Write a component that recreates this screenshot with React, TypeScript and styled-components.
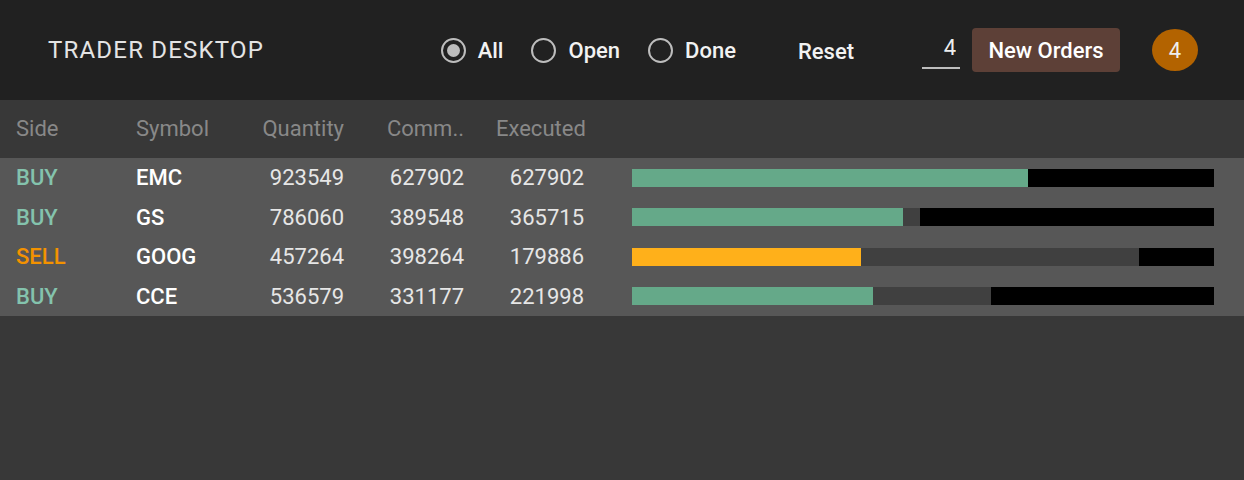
import React, { useState } from "react";
import styled, { createGlobalStyle } from "styled-components";

const GlobalStyle = createGlobalStyle`
  html, body {
    margin: 0;
    padding: 0;
    background: #383838;
    font-family: Roboto, "Noto Sans", "Liberation Sans", sans-serif;
  }
  #root {
    min-height: 100vh;
    background: #383838;
  }
  * { box-sizing: border-box; }
`;

const Page = styled.div`
  min-height: 100vh;
  display: flex;
  flex-direction: column;
  background: #383838;
`;

const TopBar = styled.header`
  height: 100px;
  background: #212121;
  display: flex;
  align-items: center;
  justify-content: space-between;
  padding: 0 46px 0 48px;
`;

const Title = styled.h1`
  margin: 0;
  font-size: 24px;
  font-weight: 400;
  letter-spacing: 1.2px;
  color: #e4e4e4;
  line-height: 1;
`;

const Controls = styled.div`
  display: flex;
  align-items: center;
`;

const RadioGroup = styled.div`
  display: flex;
  align-items: center;
  gap: 28px;
  margin-right: 62px;
`;

const RadioLabel = styled.label`
  display: flex;
  align-items: center;
  gap: 12px;
  cursor: pointer;
  font-size: 22px;
  font-weight: 500;
  color: #f2f2f2;
`;

const RadioRing = styled.span<{ $checked: boolean }>`
  width: 25px;
  height: 25px;
  border-radius: 50%;
  border: 2px solid #bdbdbd;
  display: flex;
  align-items: center;
  justify-content: center;
  &::after {
    content: "";
    width: 13px;
    height: 13px;
    border-radius: 50%;
    background: ${(p) => (p.$checked ? "#bdbdbd" : "transparent")};
  }
`;

const TextButton = styled.button`
  background: none;
  border: none;
  padding: 0;
  margin-right: 68px;
  margin-top: 2px;
  font-family: inherit;
  font-size: 22px;
  font-weight: 500;
  color: #f2f2f2;
  cursor: pointer;
`;

const CountInput = styled.input`
  width: 38px;
  height: 36px;
  margin-right: 12px;
  margin-top: 2px;
  background: transparent;
  border: none;
  border-bottom: 2px solid #bdbdbd;
  color: #eeeeee;
  font-family: inherit;
  font-size: 22px;
  text-align: right;
  padding: 0 4px 6px 0;
  outline: none;
`;

const PrimaryButton = styled.button`
  width: 148px;
  height: 44px;
  border: none;
  border-radius: 4px;
  background: #5d4037;
  color: #ffffff;
  font-family: inherit;
  font-size: 22px;
  font-weight: 500;
  margin-right: 32px;
  cursor: pointer;
`;

const Badge = styled.div`
  width: 46px;
  height: 42px;
  border-radius: 50%;
  background: #b36300;
  color: #eeeeee;
  font-size: 22px;
  display: flex;
  align-items: center;
  justify-content: center;
`;

const Table = styled.div`
  display: flex;
  flex-direction: column;
`;

const gridCols = "120px 120px 120px 120px 120px 1fr";

const HeadRow = styled.div`
  display: grid;
  grid-template-columns: ${gridCols};
  height: 58px;
  align-items: center;
  background: #383838;
`;

const HeadCell = styled.div<{ $right?: boolean }>`
  padding: 0 16px;
  font-size: 22px;
  color: #888888;
  text-align: ${(p) => (p.$right ? "right" : "left")};
  white-space: nowrap;
  margin-top: -2px;
`;

const Body = styled.div`
  background: #575757;
  display: flex;
  flex-direction: column;
`;

const Row = styled.div`
  display: grid;
  grid-template-columns: ${gridCols};
  height: 39.5px;
  align-items: center;
`;

const SideCell = styled.div<{ $sell: boolean }>`
  padding: 0 16px;
  font-size: 22px;
  font-weight: 500;
  color: ${(p) => (p.$sell ? "#f39200" : "#84c3ad")};
`;

const SymbolCell = styled.div`
  padding: 0 16px;
  font-size: 22px;
  font-weight: 500;
  color: #ffffff;
`;

const NumCell = styled.div`
  padding: 0 16px;
  font-size: 22px;
  color: #e6e6e6;
  text-align: right;
`;

const BarCell = styled.div`
  padding: 0 30px 0 32px;
`;

const Bar = styled.div`
  height: 18px;
  display: flex;
  background: #000000;
`;

const Segment = styled.div<{ $tone: "buy" | "sell" | "pending" }>`
  height: 100%;
  background: ${(p) =>
    p.$tone === "buy" ? "#65a989" : p.$tone === "sell" ? "#ffb01a" : "#404040"};
`;

type Order = {
  side: "BUY" | "SELL";
  symbol: string;
  quantity: number;
  committed: number;
  executed: number;
};

const orders: Order[] = [
  { side: "BUY", symbol: "EMC", quantity: 923549, committed: 627902, executed: 627902 },
  { side: "BUY", symbol: "GS", quantity: 786060, committed: 389548, executed: 365715 },
  { side: "SELL", symbol: "GOOG", quantity: 457264, committed: 398264, executed: 179886 },
  { side: "BUY", symbol: "CCE", quantity: 536579, committed: 331177, executed: 221998 },
];

export default function App() {
  const [filter, setFilter] = useState("All");
  const [count, setCount] = useState("4");

  return (
    <Page>
      <GlobalStyle />
      <TopBar>
        <Title>TRADER DESKTOP</Title>
        <Controls>
          <RadioGroup>
            {["All", "Open", "Done"].map((opt) => (
              <RadioLabel key={opt} onClick={() => setFilter(opt)}>
                <RadioRing $checked={filter === opt} />
                {opt}
              </RadioLabel>
            ))}
          </RadioGroup>
          <TextButton>Reset</TextButton>
          <CountInput value={count} onChange={(e) => setCount(e.target.value)} />
          <PrimaryButton>New Orders</PrimaryButton>
          <Badge>4</Badge>
        </Controls>
      </TopBar>
      <Table>
        <HeadRow>
          <HeadCell>Side</HeadCell>
          <HeadCell>Symbol</HeadCell>
          <HeadCell $right>Quantity</HeadCell>
          <HeadCell $right>Comm..</HeadCell>
          <HeadCell $right>Executed</HeadCell>
          <div />
        </HeadRow>
        <Body>
          {orders.map((o) => {
            const execPct = (o.executed / o.quantity) * 100;
            const pendPct = ((o.committed - o.executed) / o.quantity) * 100;
            return (
              <Row key={o.symbol}>
                <SideCell $sell={o.side === "SELL"}>{o.side}</SideCell>
                <SymbolCell>{o.symbol}</SymbolCell>
                <NumCell>{o.quantity}</NumCell>
                <NumCell>{o.committed}</NumCell>
                <NumCell>{o.executed}</NumCell>
                <BarCell>
                  <Bar>
                    <Segment $tone={o.side === "SELL" ? "sell" : "buy"} style={{ width: `${execPct}%` }} />
                    <Segment $tone="pending" style={{ width: `${pendPct}%` }} />
                  </Bar>
                </BarCell>
              </Row>
            );
          })}
        </Body>
      </Table>
    </Page>
  );
}
